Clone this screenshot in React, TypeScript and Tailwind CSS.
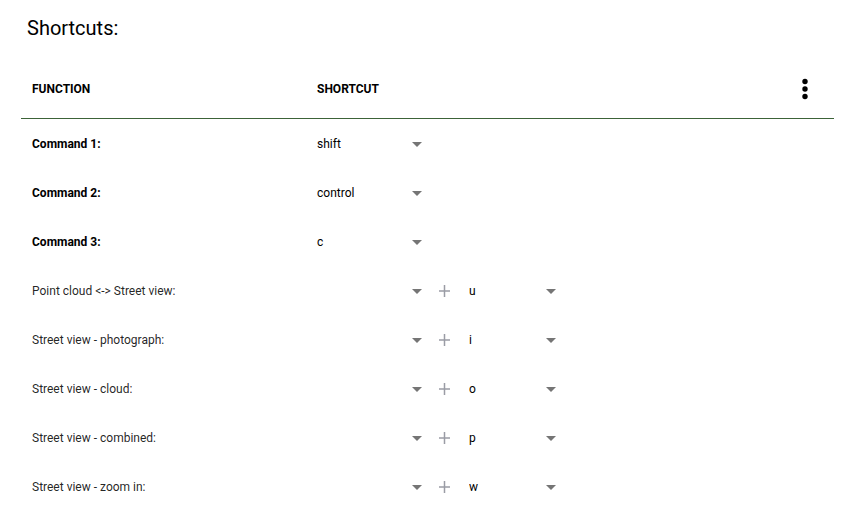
const keys = ["", "shift", "control", "alt", "c", "u", "i", "o", "p", "w"];

function KeySelect({ label, value, width }: { label: string; value: string; width: string }) {
  return (
    <div className={`relative flex items-center ${width}`}>
      <select
        aria-label={label}
        defaultValue={value}
        className="h-6 w-full appearance-none bg-transparent pr-5 text-xs text-black outline-none"
      >
        {keys.map((k) => (
          <option key={k} value={k}>
            {k}
          </option>
        ))}
      </select>
      <svg viewBox="0 0 10 6" className="pointer-events-none absolute right-0 h-[6px] w-[10px] fill-[#757575]" aria-hidden="true">
        <path d="M0 1h10L5 6z" />
      </svg>
    </div>
  );
}

const commands = [
  { name: "Command 1:", value: "shift" },
  { name: "Command 2:", value: "control" },
  { name: "Command 3:", value: "c" },
];

const actions = [
  { name: "Point cloud <-> Street view:", value: "u" },
  { name: "Street view - photograph:", value: "i" },
  { name: "Street view - cloud:", value: "o" },
  { name: "Street view - combined:", value: "p" },
  { name: "Street view - zoom in:", value: "w" },
];

export default function App() {
  return (
    <main className="bg-white pl-[21px] pr-5 font-['Roboto',sans-serif] text-black">
      <h1 className="pl-[6px] pt-3 text-xl leading-8">Shortcuts:</h1>
      <table className="mt-[15px] w-full table-fixed border-separate border-spacing-0 text-left text-xs">
        <thead>
          <tr className="h-[60px]">
            <th className="w-[285px] border-b border-[#3c6338] pl-[11px] font-bold">FUNCTION</th>
            <th className="border-b border-[#3c6338] pl-[11px] font-bold">SHORTCUT</th>
            <th className="w-[60px] border-b border-[#3c6338] pr-[17px]">
              <button type="button" aria-label="More options" className="ml-auto flex h-6 w-6 items-center justify-center">
                <svg viewBox="0 0 24 24" className="h-6 w-6" aria-hidden="true">
                  <circle cx="12" cy="4.5" r="2.7" />
                  <circle cx="12" cy="12" r="2.7" />
                  <circle cx="12" cy="19.5" r="2.7" />
                </svg>
              </button>
            </th>
          </tr>
        </thead>
        <tbody>
          {commands.map((c) => (
            <tr key={c.name} className="h-[49px]">
              <th scope="row" className="pl-[11px] font-bold">{c.name}</th>
              <td colSpan={2} className="pl-[11px]">
                <KeySelect label={c.name} value={c.value} width="w-[105px]" />
              </td>
            </tr>
          ))}
          {actions.map((a) => (
            <tr key={a.name} className="h-[49px]">
              <th scope="row" className="pl-[11px] font-normal text-black/87">{a.name}</th>
              <td colSpan={2} className="pl-[11px]">
                <div className="flex items-center">
                  <KeySelect label={`${a.name} modifier`} value="" width="w-[105px]" />
                  <svg viewBox="0 0 12 12" className="ml-[17px] mr-[18px] h-3 w-3 fill-none stroke-[#9a9ca5]" aria-hidden="true">
                    <path d="M5.5 0v12M0 6h11" strokeWidth="1.5" />
                  </svg>
                  <KeySelect label={`${a.name} key`} value={a.value} width="w-[87px]" />
                </div>
              </td>
            </tr>
          ))}
        </tbody>
      </table>
    </main>
  );
}
